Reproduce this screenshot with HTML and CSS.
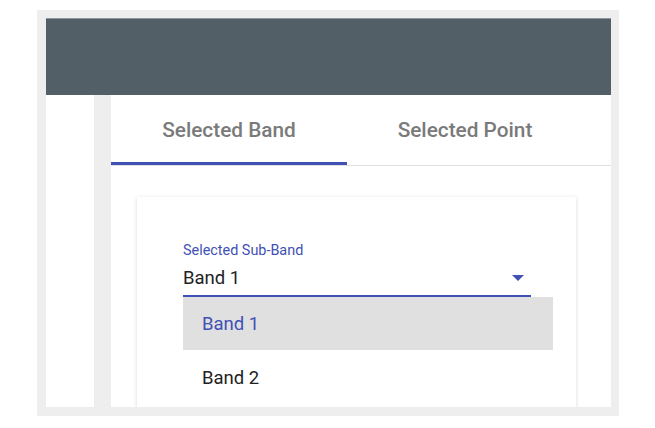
FILE: index.html
```html
<!DOCTYPE html>
<html>
<head>
<meta charset="utf-8">
<link rel="stylesheet" href="styles.css">
</head>
<body>
<div class="frame">
  <div class="screen">
    <div class="header"></div>
    <div class="body">
      <div class="rail"></div>
      <div class="rail-gap"></div>
      <div class="main">
        <div class="tabs">
          <div class="tab active">Selected Band</div>
          <div class="tab">Selected Point</div>
        </div>
        <div class="content">
          <div class="card">
            <div class="field">
              <div class="field-label">Selected Sub-Band</div>
              <div class="field-value">
                <span>Band 1</span>
                <span class="arrow"></span>
              </div>
              <div class="menu">
                <div class="option selected">Band 1</div>
                <div class="option">Band 2</div>
              </div>
            </div>
          </div>
        </div>
      </div>
    </div>
  </div>
</div>
</body>
</html>
```

FILE: styles.css
```css
* { box-sizing: border-box; }
html, body { margin: 0; padding: 0; background: #ffffff; }
body { font-family: Roboto, "Noto Sans", "Liberation Sans", sans-serif; }

.frame {
  margin: 10px 0 0 37px;
  width: 582px;
  height: 406px;
  padding: 8px 8px 9px 9px;
  background: #eeeeee;
}
.screen {
  height: 389px;
  background: #ffffff;
  overflow: hidden;
  display: flex;
  flex-direction: column;
}
.header {
  height: 77px;
  flex: none;
  background: #525f67;
  border-top: 1px solid #8d969c;
}
.body {
  flex: 1;
  display: flex;
  min-height: 0;
}
.rail { width: 48px; flex: none; background: #ffffff; }
.rail-gap { width: 17px; flex: none; background: #eeeeee; }
.main { flex: 1; display: flex; flex-direction: column; }

.tabs {
  display: flex;
  height: 71px;
  flex: none;
  border-bottom: 1px solid #e0e0e0;
}
.tab {
  width: 236px;
  height: 70px;
  display: flex;
  align-items: center;
  justify-content: center;
  padding-top: 3px;
  font-size: 20.8px;
  font-weight: 500;
  color: #7a7a7a;
  border-bottom: 3px solid transparent;
}
.tab.active { border-bottom-color: #3f51b5; }

.content {
  padding: 31px 0 0 26px;
}
.card {
  width: 439px;
  height: 260px;
  background: #ffffff;
  box-shadow: 0 1px 4px rgba(0, 0, 0, 0.16);
  padding: 45px 0 0 46px;
}
.field {
  position: relative;
  width: 348px;
}
.field-label {
  font-size: 14.4px;
  line-height: 17px;
  color: #3f51b5;
}
.field-value {
  margin-top: 6px;
  height: 32px;
  padding-bottom: 5px;
  border-bottom: 2px solid #3f51b5;
  display: flex;
  align-items: center;
  justify-content: space-between;
  font-size: 18.5px;
  line-height: 24px;
  color: #212121;
}
.arrow {
  width: 0;
  height: 0;
  margin-right: 7px;
  border-left: 6.5px solid transparent;
  border-right: 6.5px solid transparent;
  border-top: 6px solid #3f51b5;
}
.menu {
  position: absolute;
  left: 0;
  top: 100%;
  width: 370px;
  background: #ffffff;
}
.option {
  height: 55px;
  display: flex;
  align-items: center;
  padding-left: 19px;
  font-size: 18.5px;
  color: #212121;
}
.option.selected {
  height: 53px;
  background: #e0e0e0;
  color: #3f51b5;
}
```
